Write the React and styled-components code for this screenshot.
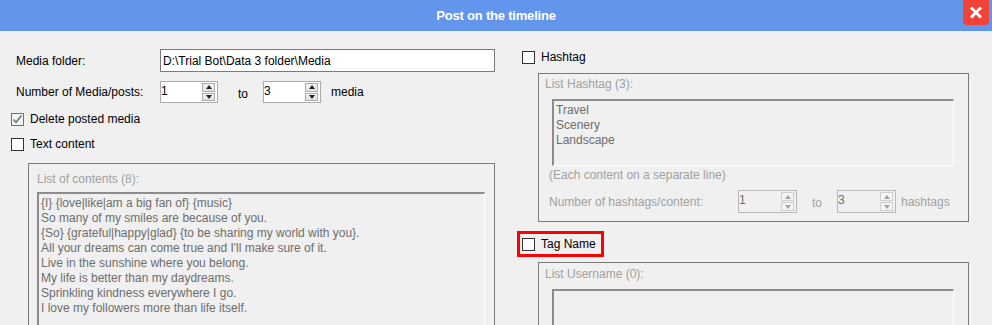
import styled, { createGlobalStyle } from "styled-components";

const GlobalStyle = createGlobalStyle`
  html, body {
    margin: 0;
    padding: 0;
    background: #f0f0f0;
  }
  body {
    font-family: "Liberation Sans", Arial, sans-serif;
    font-size: 12px;
    color: #000;
  }
`;

const contents = [
  "{I} {love|like|am a big fan of} {music}",
  "So many of my smiles are because of you.",
  "{So} {grateful|happy|glad} {to be sharing my world with you}.",
  "All your dreams can come true and I'll make sure of it.",
  "Live in the sunshine where you belong.",
  "My life is better than my daydreams.",
  "Sprinkling kindness everywhere I go.",
  "I love my followers more than life itself.",
];

const hashtags = ["Travel", "Scenery", "Landscape"];

const SpinBox = ({ value, width, disabled }) => (
  <SpinFrame $width={width} $disabled={disabled}>
    <SpinValue $disabled={disabled}>{value}</SpinValue>
    <Spinner>
      <SpinButton $disabled={disabled}>
        <Arrow $up $disabled={disabled} />
      </SpinButton>
      <SpinButton $disabled={disabled}>
        <Arrow $disabled={disabled} />
      </SpinButton>
    </Spinner>
  </SpinFrame>
);

const CheckBox = ({ checked, label }) => (
  <CheckRow>
    <Box $checked={checked}>
      {checked && (
        <svg width="11" height="11" viewBox="0 0 11 11">
          <path d="M1.5 5.5 L4 8.5 L9.5 1.5" fill="none" stroke="#6a6a6a" strokeWidth="1.4" />
        </svg>
      )}
    </Box>
    <span>{label}</span>
  </CheckRow>
);

const App = () => {
  return (
    <>
      <GlobalStyle />
      <Window>
        <TitleBar>
          <Title>Post on the timeline</Title>
          <CloseButton>
            <svg width="14" height="13" viewBox="0 0 14 13">
              <path d="M2 1.5 L12 11.5 M12 1.5 L2 11.5" stroke="#fff" strokeWidth="3" />
            </svg>
          </CloseButton>
        </TitleBar>

        <Body>
          <LeftCol>
            <FieldRow>
              <FieldLabel>Media folder:</FieldLabel>
              <TextInput>D:\Trial Bot\Data 3 folder\Media</TextInput>
            </FieldRow>
            <FieldRow $gap={9}>
              <FieldLabel>Number of Media/posts:</FieldLabel>
              <SpinBox value="1" width={58} />
              <ToText $left={20} $right={15}>to</ToText>
              <SpinBox value="3" width={58} />
              <UnitText>media</UnitText>
            </FieldRow>
            <Checks>
              <CheckBox checked label="Delete posted media" />
              <CheckBox label="Text content" />
            </Checks>
            <GroupBox $left={17} $width={467} $padLeft={8} $padTop={8} $padRight={9}>
              <GroupLabel>List of contents (8):</GroupLabel>
              <ListArea $top={6} $height={150}>
                {contents.map((line, i) => (
                  <div key={`line-${i}`}>{line}</div>
                ))}
              </ListArea>
            </GroupBox>
          </LeftCol>

          <RightCol>
            <CheckIndent>
              <CheckBox label="Hashtag" />
            </CheckIndent>
            <GroupBox $left={21} $width={431} $padLeft={6} $padTop={3} $padRight={14} $top={8}>
              <GroupLabel>List Hashtag (3):</GroupLabel>
              <ListArea $top={8} $height={67} $inset={7}>
                {hashtags.map((tag) => (
                  <div key={tag}>{tag}</div>
                ))}
              </ListArea>
              <Hint>(Each content on a separate line)</Hint>
              <HashRow>
                <HashLabel>Number of hashtags/content:</HashLabel>
                <SpinBox value="1" width={59} disabled />
                <ToText $left={15} $right={15} $muted>to</ToText>
                <SpinBox value="3" width={59} disabled />
                <UnitText $muted $left={5}>hashtags</UnitText>
              </HashRow>
            </GroupBox>
            <Highlight>
              <CheckBox label="Tag Name" />
            </Highlight>
            <GroupBox $left={21} $width={431} $padLeft={6} $padTop={4} $padRight={14} $top={5}>
              <GroupLabel>List Username (0):</GroupLabel>
              <ListArea $top={8} $height={80} $inset={7} />
            </GroupBox>
          </RightCol>
        </Body>
      </Window>
    </>
  );
};

const Window = styled.div`
  width: 992px;
  height: 325px;
  overflow: hidden;
  background: #f0f0f0;
`;

const TitleBar = styled.div`
  position: relative;
  height: 31px;
  background: #6495ed;
  display: flex;
  align-items: center;
  justify-content: center;
`;

const Title = styled.div`
  color: #fff;
  font-weight: bold;
  font-size: 13px;
  letter-spacing: -0.2px;
`;

const CloseButton = styled.div`
  position: absolute;
  top: 0;
  right: 3px;
  width: 26px;
  height: 25px;
  background: #f44336;
  border-radius: 0 0 4px 4px;
  display: flex;
  align-items: center;
  justify-content: center;
`;

const Body = styled.div`
  display: grid;
  grid-template-columns: 517px 1fr;
`;

const LeftCol = styled.div`
  padding: 18px 0 0 11px;
  display: flex;
  flex-direction: column;
`;

const RightCol = styled.div`
  padding-top: 18px;
  display: flex;
  flex-direction: column;
  align-items: flex-start;
`;

const FieldRow = styled.div`
  display: flex;
  align-items: center;
  margin-left: 5px;
  margin-top: ${(p) => p.$gap || 0}px;
`;

const FieldLabel = styled.div`
  width: 144px;
  flex-shrink: 0;
`;

const TextInput = styled.div`
  box-sizing: border-box;
  width: 335px;
  height: 23px;
  border: 1px solid #7a7a7a;
  background: #fff;
  padding: 0 2px;
  display: flex;
  align-items: center;
`;

const SpinFrame = styled.div`
  box-sizing: border-box;
  width: ${(p) => p.$width}px;
  height: ${(p) => (p.$disabled ? 23 : 22)}px;
  border: 1px solid ${(p) => (p.$disabled ? "#b8b8b8" : "#acacac")};
  background: ${(p) => (p.$disabled ? "#f0f0f0" : "#fff")};
  display: flex;
  padding: 1px 1px 1px 0;
`;

const SpinValue = styled.div`
  flex: 1;
  padding-top: 1px;
  color: ${(p) => (p.$disabled ? "#6d6d6d" : "#000")};
`;

const Spinner = styled.div`
  width: 13px;
  display: flex;
  flex-direction: column;
  gap: 1px;
  margin-right: 1px;
`;

const SpinButton = styled.div`
  flex: 1;
  box-sizing: border-box;
  border: 1px solid ${(p) => (p.$disabled ? "#cfcfcf" : "#acacac")};
  background: ${(p) => (p.$disabled ? "#f4f4f4" : "linear-gradient(#f2f2f2, #e3e3e3)")};
  display: flex;
  align-items: center;
  justify-content: center;
`;

const Arrow = styled.div`
  width: 0;
  height: 0;
  border-left: 3.5px solid transparent;
  border-right: 3.5px solid transparent;
  ${(p) => (p.$up ? "border-bottom" : "border-top")}: 4px solid
    ${(p) => (p.$disabled ? "#a0a0a0" : "#222")};
`;

const ToText = styled.div`
  margin: 0 ${(p) => p.$right}px 0 ${(p) => p.$left}px;
  padding-top: 3px;
  color: ${(p) => (p.$muted ? "#a0a0a0" : "#000")};
`;

const UnitText = styled.div`
  margin-left: ${(p) => p.$left || 10}px;
  color: ${(p) => (p.$muted ? "#a0a0a0" : "#000")};
`;

const Checks = styled.div`
  display: flex;
  flex-direction: column;
  gap: 9px;
  margin-top: 8px;
`;

const CheckRow = styled.div`
  display: flex;
  align-items: center;
  height: 16px;
  gap: 6px;
`;

const Box = styled.div`
  box-sizing: border-box;
  width: 13px;
  height: 13px;
  border: 1px solid ${(p) => (p.$checked ? "#707070" : "#333")};
  background: ${(p) => (p.$checked ? "#f4f4f4" : "#fff")};
  display: flex;
  align-items: center;
  justify-content: center;
`;

const CheckIndent = styled.div`
  margin-left: 5px;
`;

const Highlight = styled.div`
  margin-top: 9px;
  border: 3px solid #f00;
  padding: 2px 5px 2px 2px;
`;

const GroupBox = styled.div`
  box-sizing: border-box;
  margin-left: ${(p) => p.$left}px;
  margin-top: ${(p) => (p.$top === undefined ? 11 : p.$top)}px;
  width: ${(p) => p.$width}px;
  border: 1px solid #7b7b7b;
  padding: ${(p) => p.$padTop}px ${(p) => p.$padRight}px 8px ${(p) => p.$padLeft}px;
  display: flex;
  flex-direction: column;
`;

const GroupLabel = styled.div`
  color: #a0a0a0;
  line-height: 14px;
`;

const ListArea = styled.div`
  box-sizing: border-box;
  margin-top: ${(p) => p.$top}px;
  margin-left: ${(p) => p.$inset || 0}px;
  height: ${(p) => p.$height}px;
  border-top: 2px solid #8c8c8c;
  border-left: 2px solid #8c8c8c;
  border-right: 1px solid #fff;
  border-bottom: 1px solid #fff;
  padding: 2px 2px;
  color: #6d6d6d;
  line-height: 15px;
`;

const Hint = styled.div`
  color: #a0a0a0;
  margin-top: 2px;
  margin-left: 4px;
  line-height: 14px;
`;

const HashRow = styled.div`
  display: flex;
  align-items: center;
  margin-top: 8px;
  margin-left: 4px;
`;

const HashLabel = styled.div`
  width: 189px;
  color: #a0a0a0;
`;

export default App;
